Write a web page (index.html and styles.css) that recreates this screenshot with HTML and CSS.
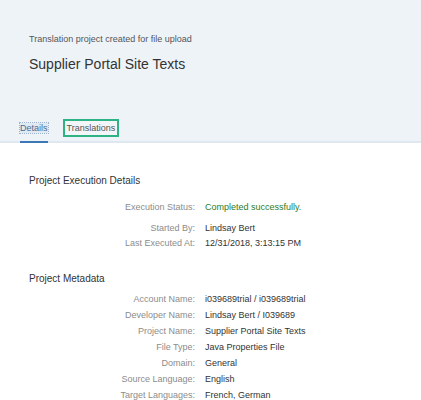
FILE: index.html
```html
<!DOCTYPE html>
<html>
<head>
<meta charset="utf-8">
<link rel="stylesheet" href="styles.css">
</head>
<body>
<div class="header">
  <div class="subtitle">Translation project created for file upload</div>
  <div class="title">Supplier Portal Site Texts</div>
  <div class="tabs">
    <div class="tab active"><span class="focus">Details</span></div>
    <div class="tab"><span class="boxed">Translations</span></div>
  </div>
</div>
<div class="content">
  <div class="section">
    <div class="section-title">Project Execution Details</div>
    <div class="form exec">
      <div class="row first"><span class="label">Execution Status:</span><span class="value success">Completed successfully.</span></div>
      <div class="row"><span class="label">Started By:</span><span class="value">Lindsay Bert</span></div>
      <div class="row"><span class="label">Last Executed At:</span><span class="value">12/31/2018, 3:13:15 PM</span></div>
    </div>
  </div>
  <div class="section">
    <div class="section-title">Project Metadata</div>
    <div class="form meta">
      <div class="row"><span class="label">Account Name:</span><span class="value">i039689trial / i039689trial</span></div>
      <div class="row"><span class="label">Developer Name:</span><span class="value">Lindsay Bert / I039689</span></div>
      <div class="row"><span class="label">Project Name:</span><span class="value">Supplier Portal Site Texts</span></div>
      <div class="row"><span class="label">File Type:</span><span class="value">Java Properties File</span></div>
      <div class="row"><span class="label">Domain:</span><span class="value">General</span></div>
      <div class="row"><span class="label">Source Language:</span><span class="value">English</span></div>
      <div class="row"><span class="label">Target Languages:</span><span class="value">French, German</span></div>
    </div>
  </div>
</div>
</body>
</html>
```

FILE: styles.css
```css
html, body {
  margin: 0;
  padding: 0;
  background: #ffffff;
  font-family: "Liberation Sans", Arial, sans-serif;
  color: #333333;
}
.header {
  background: #eef3f8;
  padding: 34px 0 0 29px;
  height: 107px;
  border-bottom: 2px solid #dfe7f0;
  display: flex;
  flex-direction: column;
}
.subtitle {
  font-size: 9px;
  line-height: 11px;
  color: #555;
}
.title {
  font-size: 14px;
  line-height: 17px;
  margin-top: 11px;
  color: #333;
}
.tabs {
  display: flex;
  margin-top: auto;
  margin-left: -9px;
  gap: 15px;
}
.tab {
  font-size: 9px;
  line-height: 11px;
  padding: 4px 0 7px;
  color: #555;
  border-bottom: 2px solid transparent;
  margin-bottom: -2px;
}
.tab.active {
  border-bottom-color: #3d78b4;
  color: #4a6d92;
}
.focus {
  outline: 1px dotted #9fb4cf;
  background: #e1e9f3;
}
.boxed {
  border: 2px solid #2eb384;
  padding: 2px 2px;
  background: #f3f6f9;
}
.content {
  padding: 31px 0 0 29px;
}
.section-title {
  font-size: 10px;
  line-height: 13px;
  color: #333;
}
.form {
  display: grid;
  grid-template-columns: 176px auto;
}
.exec {
  margin-top: 13px;
}
.meta {
  margin-top: 6px;
}
.row {
  display: contents;
}
.label {
  text-align: right;
  color: #8c8c8c;
  font-size: 9px;
  line-height: 16px;
  padding-right: 10px;
}
.value {
  font-size: 9px;
  line-height: 16px;
  color: #333;
}
.exec .label, .exec .value {
  line-height: 15px;
}
.exec .first .label, .exec .first .value {
  padding-bottom: 6px;
}
.success {
  color: #2b7c2b;
}
.section + .section {
  margin-top: 21px;
}
```
